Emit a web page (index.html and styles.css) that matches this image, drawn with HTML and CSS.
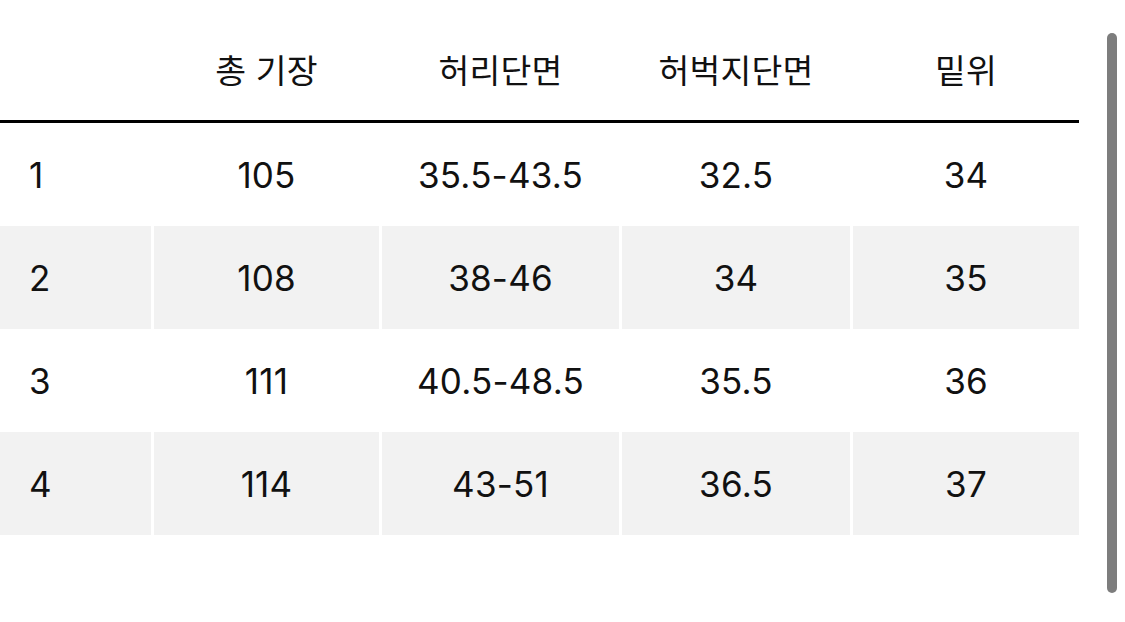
FILE: index.html
```html
<!DOCTYPE html>
<html lang="ko">
<head>
<meta charset="utf-8">
<title>사이즈</title>
<link rel="stylesheet" href="styles.css">
</head>
<body>
<div class="page">
  <div class="size-table">
    <div class="row head">
      <div class="cell first"></div>
      <div class="cell">총 기장</div>
      <div class="cell">허리단면</div>
      <div class="cell">허벅지단면</div>
      <div class="cell">밑위</div>
    </div>
    <div class="row">
      <div class="cell first">1</div>
      <div class="cell">105</div>
      <div class="cell">35.5-43.5</div>
      <div class="cell">32.5</div>
      <div class="cell">34</div>
    </div>
    <div class="row shade">
      <div class="cell first">2</div>
      <div class="cell">108</div>
      <div class="cell">38-46</div>
      <div class="cell">34</div>
      <div class="cell">35</div>
    </div>
    <div class="row">
      <div class="cell first">3</div>
      <div class="cell">111</div>
      <div class="cell">40.5-48.5</div>
      <div class="cell">35.5</div>
      <div class="cell">36</div>
    </div>
    <div class="row shade">
      <div class="cell first">4</div>
      <div class="cell">114</div>
      <div class="cell">43-51</div>
      <div class="cell">36.5</div>
      <div class="cell">37</div>
    </div>
  </div>
  <div class="scrollbar"></div>
</div>
</body>
</html>
```

FILE: styles.css
```css
html, body {
  margin: 0;
  padding: 0;
  background: #ffffff;
}

.page {
  position: relative;
  width: 1125px;
  height: 622px;
  overflow: hidden;
  font-family: "Inter", "Noto Sans CJK KR", sans-serif;
  color: #111111;
}

.size-table {
  width: 1079px;
  display: flex;
  flex-direction: column;
}

.row {
  display: grid;
  grid-template-columns: 151px 225px 237px 228px 226px;
  column-gap: 3px;
  height: 103px;
}

.row.head {
  height: 120px;
  border-bottom: 3px solid #000000;
}

.cell {
  display: flex;
  align-items: center;
  justify-content: center;
  font-size: 35px;
  letter-spacing: 0.2px;
}

.head .cell {
  font-family: "Noto Sans CJK KR", sans-serif;
  font-size: 33.5px;
  padding-top: 17px;
}

.cell.first {
  justify-content: flex-start;
  padding-left: 29px;
}

.shade .cell {
  background: #f2f2f2;
}

.scrollbar {
  position: absolute;
  left: 1107px;
  top: 33px;
  width: 10px;
  height: 560px;
  border-radius: 5px;
  background: #7d7d7d;
}
```
